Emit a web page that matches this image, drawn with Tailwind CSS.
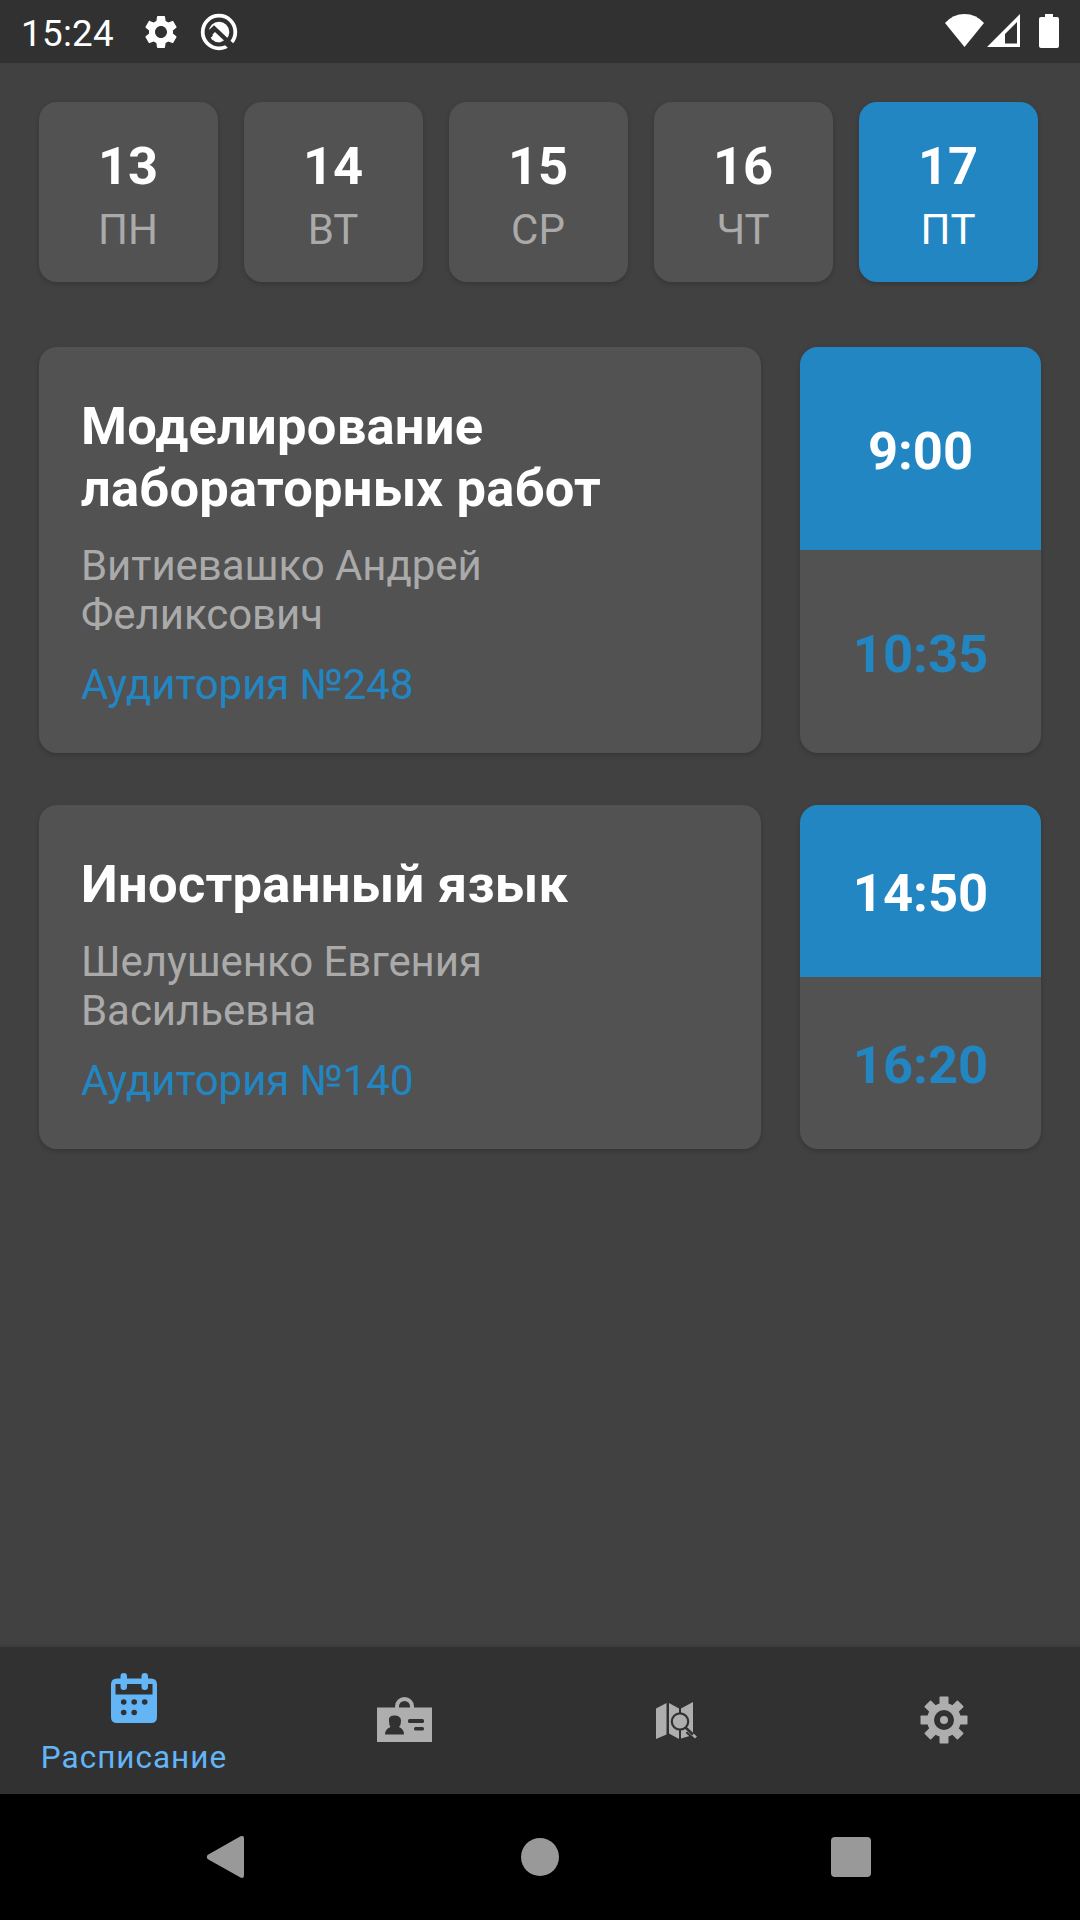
<!DOCTYPE html>
<html lang="ru">
<head>
<meta charset="utf-8">
<title>Расписание</title>
<script src="https://cdn.jsdelivr.net/npm/@tailwindcss/browser@4"></script>
</head>
<body class="bg-[#414141]">
<div class="flex h-[1920px] w-[1080px] flex-col overflow-hidden bg-[#414141] font-[Roboto,sans-serif] text-white">
  <header class="flex h-[63px] shrink-0 items-center bg-[#313131] pl-[21px]">
    <span class="w-[120px] pt-[3px] text-[36.75px] leading-[43px] tracking-[0.3px]">15:24</span>
    <svg class="size-10" viewBox="0 0 24 24" fill="#fff"><path d="M19.14 12.94c.04-.3.06-.61.06-.94 0-.32-.02-.64-.07-.94l2.03-1.58a.49.49 0 0 0 .12-.61l-1.92-3.32a.488.488 0 0 0-.59-.22l-2.39.96c-.5-.38-1.03-.7-1.62-.94l-.36-2.54a.484.484 0 0 0-.48-.41h-3.84c-.24 0-.43.17-.47.41l-.36 2.54c-.59.24-1.13.57-1.62.94l-2.39-.96c-.22-.08-.47 0-.59.22L2.74 8.87c-.12.21-.08.47.12.61l2.03 1.58c-.05.3-.09.63-.09.94s.02.64.07.94l-2.03 1.58a.49.49 0 0 0-.12.61l1.92 3.32c.12.22.37.29.59.22l2.39-.96c.5.38 1.03.7 1.62.94l.36 2.54c.05.24.24.41.48.41h3.84c.24 0 .44-.17.47-.41l.36-2.54c.59-.24 1.13-.56 1.62-.94l2.39.96c.22.08.47 0 .59-.22l1.92-3.32c.12-.22.07-.47-.12-.61l-2.01-1.58zM12 15.6c-1.98 0-3.600-1.620-3.600-3.600s1.620-3.600 3.600-3.600 3.600 1.620 3.600 3.600-1.620 3.600-3.600 3.600z"/></svg>
    <svg class="ml-[18px] size-10" viewBox="0 0 40 40"><circle cx="20" cy="20" r="16.3" fill="none" stroke="#fff" stroke-width="3.800"/><circle cx="20" cy="20" r="10.300" fill="#fff"/><path d="M8 24.500l7-6.500L33 35" fill="none" stroke="#313131" stroke-width="7"/><path d="M11 22.500l5-5L30 31" fill="none" stroke="#fff" stroke-width="0"/><path d="M13.500 22.500l2.500-2.500 9 8.500q-5.500 3.500-10 0z" fill="#fff"/></svg>
    <svg class="ml-auto mr-5 h-10 w-[116px]" viewBox="944 12 116 40" fill="#fff"><path d="M945 23Q953 14 964.500 14T984 23L964.500 47Z"/><path d="M1020 14v33h-33zM1017 22l-12 12v9.500h12z" fill-rule="evenodd"/><path d="M1045 14h8v3h4q2 0 2 2v27q0 2-2 2h-16q-2 0-2-2V19q0-2 2-2h4z"/></svg>
  </header>

  <main class="flex grow flex-col px-[39px] pt-[39px]">
    <div class="flex gap-[26px] text-center text-[42px] leading-[49px] text-[#aaaaaa]">
      <div class="h-[180px] w-[179px] rounded-[18px] bg-[#525252] pt-[33px] pr-px shadow-[0_2px_5px_rgba(0,0,0,0.18)]"><div class="mb-2 text-[52.5px] leading-[62px] font-bold text-white">13</div>ПН</div>
      <div class="h-[180px] w-[179px] rounded-[18px] bg-[#525252] pt-[33px] pr-px shadow-[0_2px_5px_rgba(0,0,0,0.18)]"><div class="mb-2 text-[52.5px] leading-[62px] font-bold text-white">14</div>ВТ</div>
      <div class="h-[180px] w-[179px] rounded-[18px] bg-[#525252] pt-[33px] pr-px shadow-[0_2px_5px_rgba(0,0,0,0.18)]"><div class="mb-2 text-[52.5px] leading-[62px] font-bold text-white">15</div>СР</div>
      <div class="h-[180px] w-[179px] rounded-[18px] bg-[#525252] pt-[33px] pr-px shadow-[0_2px_5px_rgba(0,0,0,0.18)]"><div class="mb-2 text-[52.5px] leading-[62px] font-bold text-white">16</div>ЧТ</div>
      <div class="h-[180px] w-[179px] rounded-[18px] bg-[#2286c3] pt-[33px] pr-px text-white shadow-[0_2px_5px_rgba(0,0,0,0.18)]"><div class="mb-2 text-[52.5px] leading-[62px] font-bold">17</div>ПТ</div>
    </div>

    <section class="mt-[65px] flex h-[406px] gap-[39px]">
      <div class="w-[722px] rounded-[18px] bg-[#525252] px-[42px] pt-[48px] text-[42px] leading-[49px] tracking-[-0.06px] shadow-[0_2px_5px_rgba(0,0,0,0.18)]">
        <h2 class="text-[52.5px] leading-[62px] font-bold tracking-[0.22px]">Моделирование<br>лабораторных работ</h2>
        <p class="mt-[22px] text-[#aaaaaa]">Витиевашко Андрей<br>Феликсович</p>
        <p class="mt-[21px] text-[#2286c3]">Аудитория №248</p>
      </div>
      <div class="flex w-[241px] flex-col overflow-hidden rounded-[18px] bg-[#525252] text-[52.5px] leading-[62px] font-bold shadow-[0_2px_5px_rgba(0,0,0,0.18)]">
        <div class="flex flex-1 items-center justify-center bg-[#2286c3] pt-1">9:00</div>
        <div class="flex flex-1 items-center justify-center pt-1 text-[#2286c3]">10:35</div>
      </div>
    </section>

    <section class="mt-[52px] flex h-[344px] gap-[39px]">
      <div class="w-[722px] rounded-[18px] bg-[#525252] px-[42px] pt-[48px] text-[42px] leading-[49px] tracking-[-0.06px] shadow-[0_2px_5px_rgba(0,0,0,0.18)]">
        <h2 class="text-[52.5px] leading-[62px] font-bold tracking-[0.27px]">Иностранный язык</h2>
        <p class="mt-[22px] text-[#aaaaaa]">Шелушенко Евгения<br>Васильевна</p>
        <p class="mt-[21px] text-[#2286c3]">Аудитория №140</p>
      </div>
      <div class="flex w-[241px] flex-col overflow-hidden rounded-[18px] bg-[#525252] text-[52.5px] leading-[62px] font-bold shadow-[0_2px_5px_rgba(0,0,0,0.18)]">
        <div class="flex flex-1 items-center justify-center bg-[#2286c3] pt-[3px]">14:50</div>
        <div class="flex flex-1 items-center justify-center pt-[3px] text-[#2286c3]">16:20</div>
      </div>
    </section>
  </main>

  <nav class="grid h-[147px] shrink-0 grid-cols-4 bg-[#313131] shadow-[0_-1px_4px_rgba(0,0,0,0.12)]">
    <div class="flex flex-col items-center pt-[26px] pr-[2px] text-[#64b5f6]">
      <svg class="h-[51px] w-[48px]" viewBox="0 0 48 51" fill="currentColor"><path fill-rule="evenodd" d="M7 5.500h34q6 0 6 6V44q0 6-6 6H7q-6 0-6-6V11.500q0-6 6-6zM5.500 11v10.500h37V11z"/><rect x="10.500" y="0" width="6.500" height="17" rx="3.250"/><rect x="31.500" y="0" width="6.500" height="17" rx="3.250"/><g fill="#313131"><circle cx="13.700" cy="29" r="2.800"/><circle cx="24.200" cy="29" r="2.800"/><circle cx="34.700" cy="29" r="2.800"/><circle cx="13.700" cy="39.500" r="2.800"/><circle cx="24.200" cy="39.500" r="2.800"/></g></svg>
      <span class="mt-[15px] text-[31.5px] leading-[37px] tracking-[1px]">Расписание</span>
    </div>
    <div class="flex items-center justify-center pr-[2px] pb-[2px]">
      <svg class="h-[46px] w-[55px]" viewBox="0 0 55 46" fill="#aeaeae"><path d="M0 10.500h55V45H0z"/><path d="M20 12V9.500a7.500 7.500 0 0 1 15 0V12" fill="none" stroke="#aeaeae" stroke-width="4"/><g fill="#313131"><path d="M12 24Q11 18.500 17.500 18.500T24 24q0 4-2 6 5 2 5 7.500H8Q8 32 13.500 30 12 28 12 24z"/><rect x="31" y="22" width="16" height="4" rx="1.500"/><rect x="37" y="30" width="10" height="3.600" rx="1.500"/></g></svg>
    </div>
    <div class="flex items-center justify-center pl-[4px]">
      <svg class="h-[38px] w-[42px]" viewBox="0 0 42 38"><g fill="#aeaeae"><path d="M0 6.500L10.500 1v31.500L0 37zM13 1l10 5.500V37l-10-5.500zM25 6.500L37 0v33l-12 3.500z"/></g><path d="M31 29.500l8 7" stroke="#313131" stroke-width="4"/><path d="M32 28.500l8 7" stroke="#aeaeae" stroke-width="2.800"/><path d="M29 25l8 7.500" stroke="#313131" stroke-width="2.400"/><circle cx="24" cy="19.500" r="8.200" fill="#aeaeae" stroke="#313131" stroke-width="2.200"/></svg>
    </div>
    <div class="flex items-center justify-center pr-[2px] pb-[1px]">
      <svg class="size-[48px]" viewBox="-24 -24 48 48"><g fill="#aeaeae"><circle r="17"/><g id="teeth"><rect x="-4.500" y="-23.500" width="9" height="47" rx=".8"/><rect x="-23.500" y="-4.500" width="47" height="9" rx=".8"/></g><use href="#teeth" transform="rotate(45)"/></g><circle r="7" fill="#aeaeae" stroke="#313131" stroke-width="6"/></svg>
    </div>
  </nav>

  <footer class="flex h-[126px] shrink-0 items-center bg-black pl-[206px]">
    <svg class="h-[44px] w-[38px]" viewBox="0 0 38 44" fill="#999"><path d="M1.500 20L34.500 1.300Q38 0 38 3v37q0 4-3.500 2.500L1.500 24Q0 22 1.500 20z"/></svg>
    <div class="ml-[277px] size-[38px] rounded-full bg-[#999]"></div>
    <div class="ml-[272px] size-10 rounded-[4px] bg-[#999]"></div>
  </footer>
</div>
</body>
</html>
